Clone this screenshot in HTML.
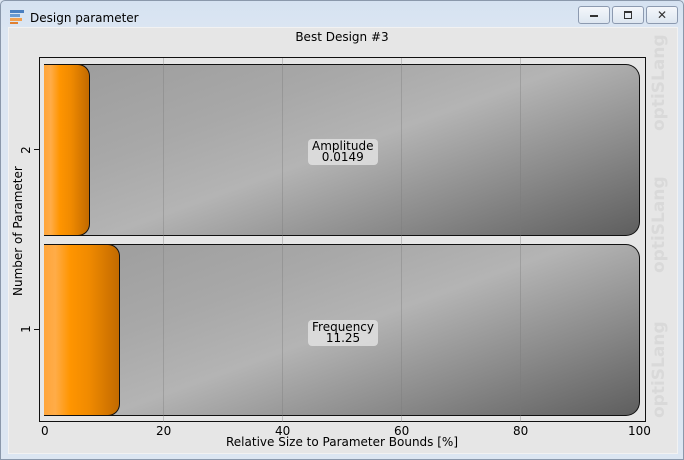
<!DOCTYPE html>
<html><head><style>
body{margin:0;width:684px;height:460px;overflow:hidden;background:#dce6f2;font-family:"DejaVu Sans","Liberation Sans",sans-serif;position:relative}
.win{position:absolute;left:0;top:0;width:682px;height:458px;border:1px solid #8a98ab;border-radius:5px 5px 0 0;background:linear-gradient(#d5e2f1,#dce6f2 30px)}
.title{position:absolute;left:30px;top:11px;font-size:12px;color:#000}
.btn{position:absolute;top:6px;height:16px;border:1px solid #8c9ab0;border-radius:3px;background:linear-gradient(#f4f7fb,#dde6f0)}
.content{position:absolute;left:8px;top:27px;width:668px;height:425px;background:#e6e6e6;border:1px solid #f2f2f2}
.abs{position:absolute}
.bar{position:absolute;left:44px;width:595px;border:1px solid #111;border-left:none;border-radius:0 14px 14px 0;background:linear-gradient(160deg,#9c9c9c 0%,#a8a8a8 30%,#b4b4b4 50%,#8a8a8a 75%,#5e5e5e 100%);overflow:hidden}
.or{position:absolute;left:44px;border:1px solid #111;border-left:none;border-radius:0 12px 12px 0;background:linear-gradient(90deg,#ffa53a 0%,#ffac48 15%,#ff9500 35%,#f08a00 60%,#c26a00 100%)}
.lbl{position:absolute;background:rgba(225,225,225,.85);border-radius:4px;font-size:12px;line-height:11px;text-align:center;padding:2px 4px}
.tick{position:absolute;font-size:12px;top:424px}
.wm{position:absolute;left:652px;font-weight:bold;font-size:17px;line-height:14px;color:#d9d9d9;transform:rotate(-90deg);transform-origin:0 0;white-space:nowrap}
.grid{position:absolute;top:58px;width:1px;height:364px;background:rgba(120,120,120,.35)}
</style></head><body>
<div class="win"></div>
<svg class="abs" style="left:9px;top:9px" width="16" height="16"><rect x="1" y="1" width="14" height="3" fill="#4a7fc0"/><rect x="1" y="5" width="10" height="3" fill="#6a9ad0"/><rect x="1" y="9" width="12" height="3" fill="#f0a050"/><rect x="1" y="13" width="8" height="2" fill="#e08030"/></svg>
<div class="title">Design parameter</div>
<div class="btn" style="left:578px;width:30px"><div class="abs" style="left:11px;top:8px;width:8px;height:2px;background:#333"></div></div>
<div class="btn" style="left:612px;width:30px"><div class="abs" style="left:11px;top:4px;width:6px;height:5px;border:1px solid #333;border-top-width:2px"></div></div>
<div class="btn" style="left:646px;width:30px;font-size:12px;text-align:center;line-height:16px;color:#333">✕</div>
<div class="content"></div>
<div class="abs" style="left:0;width:684px;top:30px;text-align:center;font-size:12px">Best Design #3</div>
<div class="wm" style="top:131px">optiSLang</div>
<div class="wm" style="top:273px">optiSLang</div>
<div class="wm" style="top:418px">optiSLang</div>
<div class="abs" style="left:39px;top:57px;width:607px;height:365px;border:1px solid #111;box-sizing:border-box"></div>
<div class="bar" style="top:64px;height:170px"></div>
<div class="bar" style="top:244px;height:170px"></div>
<div class="grid" style="left:163px"></div><div class="grid" style="left:282px"></div><div class="grid" style="left:401px"></div><div class="grid" style="left:520px"></div>
<div class="or" style="top:64px;height:170px;width:45px"></div>
<div class="or" style="top:244px;height:170px;width:75px"></div>
<div class="lbl" style="left:308px;top:139px">Amplitude<br>0.0149</div>
<div class="lbl" style="left:308px;top:320px">Frequency<br>11.25</div>
<div class="abs" style="left:34px;top:149px;width:5px;height:1px;background:#111"></div>
<div class="abs" style="left:34px;top:329px;width:5px;height:1px;background:#111"></div>
<div class="abs" style="left:22px;top:143px;font-size:12px;transform:rotate(-90deg)">2</div>
<div class="abs" style="left:22px;top:322px;font-size:12px;transform:rotate(-90deg)">1</div>
<div class="abs" style="left:11px;top:296px;font-size:12px;transform:rotate(-90deg);transform-origin:0 0;white-space:nowrap">Number of Parameter</div>
<div class="tick" style="left:41px">0</div>
<div class="tick" style="left:156px">20</div>
<div class="tick" style="left:275px">40</div>
<div class="tick" style="left:394px">60</div>
<div class="tick" style="left:513px">80</div>
<div class="tick" style="left:628px">100</div>
<div class="abs" style="left:0;width:684px;top:435px;text-align:center;font-size:12px">Relative Size to Parameter Bounds [%]</div>
</body></html>
